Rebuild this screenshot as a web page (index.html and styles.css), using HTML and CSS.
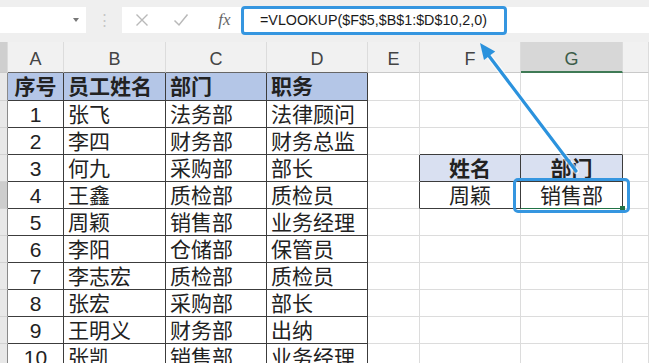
FILE: index.html
```html
<!DOCTYPE html>
<html lang="zh-CN">
<head>
  <meta charset="UTF-8">
  <title>VLOOKUP</title>
  <link rel="stylesheet" href="styles.css">
</head>
<body>

  <div class="formula-bar">
    <div class="name-box"><span class="caret"></span></div>
    <span class="grip">⋮</span>
    <div class="formula-input">
      <span class="tool cancel">
        <svg width="14" height="14" viewBox="0 0 14 14"><path d="M1.5 1.5 L12.5 12.5 M12.5 1.5 L1.5 12.5" stroke="#b9b9b9" stroke-width="1.4" fill="none"/></svg>
      </span>
      <span class="tool confirm">
        <svg width="16" height="14" viewBox="0 0 16 14"><path d="M1.5 7.5 L6 12 L14.5 1.5" stroke="#b9b9b9" stroke-width="1.5" fill="none"/></svg>
      </span>
      <span class="tool fx">fx</span>
      <span class="formula">=VLOOKUP($F$5,$B$1:$D$10,2,0)</span>
    </div>
  </div>

  <table class="sheet">
    <colgroup>
      <col class="w-rh"><col class="w-a"><col class="w-b"><col class="w-c"><col class="w-d">
      <col class="w-e"><col class="w-f"><col class="w-g"><col class="w-h">
    </colgroup>
    <tr class="col-head">
      <th class="corner"></th>
      <th class="over">A</th><th class="over">B</th><th class="over">C</th><th class="over">D</th>
      <th>E</th><th>F</th><th class="active">G</th><th></th>
    </tr>
    <tr class="first">
      <th class="rh"></th>
      <td class="t hd c">序号</td><td class="t hd">员工姓名</td><td class="t hd">部门</td><td class="t hd">职务</td>
      <td></td><td></td><td></td><td></td>
    </tr>
    <tr>
      <th class="rh"></th>
      <td class="t c">1</td><td class="t">张飞</td><td class="t">法务部</td><td class="t">法律顾问</td>
      <td></td><td></td><td></td><td></td>
    </tr>
    <tr>
      <th class="rh"></th>
      <td class="t c">2</td><td class="t">李四</td><td class="t">财务部</td><td class="t">财务总监</td>
      <td></td><td class="bb"></td><td class="bb"></td><td></td>
    </tr>
    <tr>
      <th class="rh"></th>
      <td class="t c">3</td><td class="t">何九</td><td class="t">采购部</td><td class="t">部长</td>
      <td class="br"></td><td class="t lk">姓名</td><td class="t lk">部门</td><td></td>
    </tr>
    <tr>
      <th class="rh on"></th>
      <td class="t c">4</td><td class="t">王鑫</td><td class="t">质检部</td><td class="t">质检员</td>
      <td class="br"></td><td class="t c">周颖</td><td class="t c sel">销售部</td><td></td>
    </tr>
    <tr>
      <th class="rh"></th>
      <td class="t c">5</td><td class="t">周颖</td><td class="t">销售部</td><td class="t">业务经理</td>
      <td></td><td></td><td></td><td></td>
    </tr>
    <tr>
      <th class="rh"></th>
      <td class="t c">6</td><td class="t">李阳</td><td class="t">仓储部</td><td class="t">保管员</td>
      <td></td><td></td><td></td><td></td>
    </tr>
    <tr>
      <th class="rh"></th>
      <td class="t c">7</td><td class="t">李志宏</td><td class="t">质检部</td><td class="t">质检员</td>
      <td></td><td></td><td></td><td></td>
    </tr>
    <tr>
      <th class="rh"></th>
      <td class="t c">8</td><td class="t">张宏</td><td class="t">采购部</td><td class="t">部长</td>
      <td></td><td></td><td></td><td></td>
    </tr>
    <tr>
      <th class="rh"></th>
      <td class="t c">9</td><td class="t">王明义</td><td class="t">财务部</td><td class="t">出纳</td>
      <td></td><td></td><td></td><td></td>
    </tr>
    <tr>
      <th class="rh"></th>
      <td class="t c">10</td><td class="t">张凯</td><td class="t">销售部</td><td class="t">业务经理</td>
      <td></td><td></td><td></td><td></td>
    </tr>
  </table>

  <!-- annotation arrow from the result cell up to the formula -->
  <svg class="arrow" width="649" height="363" viewBox="0 0 649 363">
    <line x1="576" y1="171" x2="489" y2="56" stroke="#ffffff" stroke-opacity="0.6" stroke-width="6" stroke-linecap="round"/>
    <line x1="576" y1="171" x2="489" y2="56" stroke="#2b92dd" stroke-width="3.2" stroke-linecap="round"/>
    <polygon points="480,43 495.2,51.6 484,60" fill="#2b92dd"/>
  </svg>

</body>
</html>
```

FILE: styles.css
```css
body {
  margin: 0;
  width: 649px;
  height: 363px;
  overflow: hidden;
  position: relative;
  background-color: #fff;
  font-family: "Liberation Sans", "Noto Sans CJK SC", sans-serif;
  color: #222;
}

.formula-bar {
  display: flex;
  align-items: flex-start;
  box-sizing: border-box;
  height: 42px;
  padding-top: 7px;
  background-color: #efefef;
}

.name-box {
  display: flex;
  align-items: center;
  justify-content: flex-end;
  box-sizing: border-box;
  width: 86px;
  height: 26px;
  padding-right: 7px;
  background-color: #fff;
}

.caret {
  border-left: 3px solid transparent;
  border-right: 3px solid transparent;
  border-top: 4px solid #777;
}

.grip {
  width: 36px;
  text-align: center;
  color: #c6c6c6;
  font-size: 15px;
  line-height: 26px;
}

.formula-input {
  flex: 1;
  display: flex;
  align-items: center;
  height: 26px;
  background-color: #fff;
}

.tool {
  display: flex;
  align-items: center;
  justify-content: center;
  flex-shrink: 0;
}

.cancel {
  width: 40px;
}

.confirm {
  width: 38px;
}

.fx {
  box-sizing: border-box;
  width: 41px;
  padding-left: 8px;
  font-family: "Liberation Serif", serif;
  font-style: italic;
  font-size: 17px;
  color: #666;
}

.formula {
  flex-shrink: 0;
  box-sizing: border-box;
  width: 266px;
  height: 29px;
  padding-left: 16px;
  border: 3px solid #3596e0;
  border-radius: 4px;
  font-size: 14.3px;
  line-height: 23px;
  color: #1a1a1a;
}

.sheet {
  border-collapse: separate;
  border-spacing: 0;
  table-layout: fixed;
  width: 649px;
  font-size: 21px;
}

.w-rh { width: 8px; }
.w-a { width: 56px; }
.w-b { width: 102px; }
.w-c { width: 101px; }
.w-d { width: 101px; }
.w-e { width: 52px; }
.w-f { width: 101px; }
.w-g { width: 102px; }
.w-h { width: 26px; }

.sheet tr {
  height: 27px;
}

.sheet tr.col-head {
  height: 31px;
}

.sheet tr.first {
  height: 28px;
}

.sheet td, .sheet th {
  padding: 0 0 0 4px;
  border-right: 1px solid #dcdcdc;
  border-bottom: 1px solid #dcdcdc;
  line-height: 1;
  white-space: nowrap;
  overflow: hidden;
  font-weight: normal;
  text-align: left;
}

.col-head th {
  padding: 4px 0 0;
  background-color: #f1f1f1;
  border-bottom-color: #c9c9c9;
  text-align: center;
  font-size: 18px;
  color: #444;
}

.col-head th.over {
  border-bottom-color: #666;
}

.col-head th.active {
  background-color: #d7d7d7;
  border-bottom: 2px solid #3f7a55;
  color: #3d5c49;
}

.col-head th.corner {
  background-color: #cfcfcf;
}

.sheet th.rh {
  padding: 0;
  background-color: #e8e8e8;
  border-right-color: #8a8a8a;
  border-bottom-color: #d2d2d2;
}

.sheet th.rh.on {
  background-color: #cdcdcd;
}

.sheet td.t {
  border-right-color: #3c3c3c;
  border-bottom-color: #3c3c3c;
}

.sheet td.br {
  border-right-color: #3c3c3c;
}

.sheet td.bb {
  border-bottom-color: #3c3c3c;
}

.sheet td.c {
  padding-left: 0;
  text-align: center;
}

.sheet td.hd {
  background-color: #b4c6e7;
  font-weight: bold;
}

.sheet td.lk {
  padding-left: 0;
  background-color: #d9e0f1;
  font-weight: bold;
  text-align: center;
}

.sheet td.sel {
  position: relative;
  overflow: visible;
  border-bottom: 1px solid #217346;
}

.sheet td.sel::after {
  content: "";
  position: absolute;
  left: -8px;
  right: -8px;
  top: -4px;
  bottom: -5px;
  border: 3px solid #3596e0;
  border-radius: 5px;
}

.sheet td.sel::before {
  content: "";
  position: absolute;
  right: -3px;
  bottom: -3px;
  width: 5px;
  height: 5px;
  background-color: #217346;
}

.arrow {
  position: absolute;
  left: 0;
  top: 0;
  pointer-events: none;
}
```
